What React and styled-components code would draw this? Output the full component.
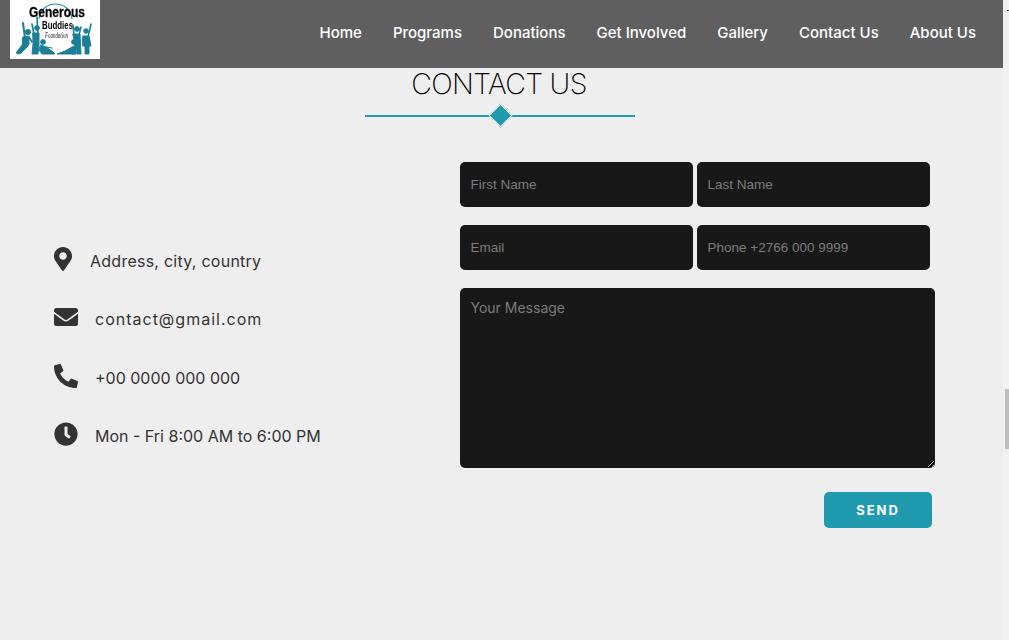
import React from "react";
import styled, { createGlobalStyle } from "styled-components";
import { FaMapMarkerAlt, FaEnvelope, FaPhoneAlt, FaClock } from "react-icons/fa";

const Global = createGlobalStyle`
  html, body { margin: 0; padding: 0; background: #eeeeee; }
  body { font-family: Inter, "Open Sans", sans-serif; overflow: hidden; }
`;

const Page = styled.div`
  position: relative;
  width: 1009px;
  height: 640px;
  overflow: hidden;
`;
const Content = styled.div`
  width: 1003px;
`;
const Header = styled.header`
  height: 68px;
  background: #5f5f5f;
  display: flex;
  justify-content: space-between;
  padding: 0 27px 0 10px;
  box-sizing: border-box;
`;
const LogoBox = styled.div`
  width: 90px;
  height: 59px;
  background: #fff;
  svg { display: block; filter: blur(0.4px); }
`;
const Nav = styled.nav`
  display: flex;
  align-items: center;
  gap: 31px;
  height: 65px;
`;
const NavLink = styled.a`
  font-size: 15px;
  font-weight: 500;
  color: #fff;
`;
const Heading = styled.div`
  width: 1000px;
`;
const Title = styled.h1`
  margin: 0;
  height: 36px;
  padding-right: 2px;
  text-align: center;
  font-size: 28.5px;
  line-height: 32px;
  font-weight: 200;
  color: #000;
  letter-spacing: -0.7px;
`;
const Divider = styled.div`
  position: relative;
  width: 270px;
  height: 2px;
  margin: 11px auto 0;
  background: #1f9aae;
`;
const Diamond = styled.span`
  position: absolute;
  left: 126.5px;
  top: -8.5px;
  width: 17px;
  height: 17px;
  box-sizing: border-box;
  background: #1f9aae;
  border: 1.5px solid #fff;
  transform: rotate(45deg);
`;
const Columns = styled.section`
  display: flex;
  padding: 45px 0 0 54px;
`;
const Info = styled.ul`
  list-style: none;
  margin: 0;
  padding: 85px 0 0;
  width: 406px;
`;
const InfoRow = styled.li`
  display: flex;
  align-items: flex-start;
  gap: ${(p) => p.$gap}px;
  height: 58.3px;
  color: #333;
  svg { height: 24px; flex: none; width: ${(p) => p.$icon}px; }
`;
const InfoText = styled.span`
  font-size: 16px;
  line-height: 24px;
  padding-top: 2px;
  color: #333;
  letter-spacing: ${(p) => p.$track}px;
`;
const Form = styled.form`
  width: 475px;
  display: flex;
  flex-direction: column;
`;
const Row = styled.div`
  display: flex;
  gap: 4px;
  margin-bottom: 18px;
`;
const Field = styled.input`
  width: 233px;
  height: 45px;
  box-sizing: border-box;
  border: 0;
  border-radius: 5px;
  padding: 0 10.5px 1px;
  background: #181818;
  color: #fff;
  font: 13.5px "Liberation Sans", Arial, sans-serif;
  &::placeholder { color: #7c7c7c; opacity: 1; }
`;
const Message = styled.textarea`
  display: block;
  width: 475px;
  height: 180px;
  box-sizing: border-box;
  border: 0;
  border-radius: 5px;
  padding: 11px 10.5px;
  background: #181818;
  color: #fff;
  font: 14px/18px Inter, sans-serif;
  &::placeholder { color: #7c7c7c; opacity: 1; }
`;
const Actions = styled.div`
  display: flex;
  justify-content: flex-end;
  padding: 24px 3px 0 0;
`;
const Send = styled.button`
  width: 108px;
  height: 36px;
  border: 0;
  border-radius: 5px;
  background: #1f9aae;
  color: #fff;
  font: 700 13px Inter, sans-serif;
  letter-spacing: 2px;
`;
const Track = styled.div`
  position: absolute;
  right: 0;
  top: 68px;
  bottom: 0;
  width: 6px;
  background: #f1f1f1;
`;
const TrackTop = styled(Track)`
  top: 0;
  bottom: auto;
  height: 68px;
`;
const Tick = styled.span`
  position: absolute;
  right: 0;
  top: 10px;
  width: 2px;
  height: 1px;
  background: #444;
`;
const Thumb = styled.div`
  position: absolute;
  right: 0;
  top: 321px;
  width: 4px;
  height: 60px;
  background: #bdbdbd;
`;

const Logo = () => (
  <svg width="90" height="59" viewBox="0 0 90 59">
    <path d="M29 19 C31 -1 60 -1 62 19" fill="none" stroke="#1f8ba0" strokeWidth="1.1" />
    <text x="19" y="17" textLength="56" lengthAdjust="spacingAndGlyphs" fontFamily="Liberation Sans" fontWeight="700" fontSize="15.5" stroke="#000" strokeWidth="0.3" fill="#000">Generous</text>
    <text x="32" y="28.5" textLength="31" lengthAdjust="spacingAndGlyphs" fontFamily="Liberation Sans" fontWeight="700" fontSize="10" fill="#000">Buddies</text>
    <text x="35" y="37.5" textLength="23" lengthAdjust="spacingAndGlyphs" fontFamily="Liberation Serif" fontStyle="italic" fontSize="8" fill="#222">Foundation</text>
    <g fill="#1c7f96" stroke="#1c7f96" strokeLinecap="round" strokeLinejoin="round">
      <circle cx="18" cy="32" r="2.6" />
      <path d="M13 37 L19 36 L19 44 L17 47 L10 54 L6 53 L12 45 Z" />
      <path d="M15 38 L13 23" strokeWidth="2" fill="none" />
      <path d="M19 37 L22 42" strokeWidth="1.6" fill="none" />
      <circle cx="27" cy="28" r="2.4" />
      <path d="M23 33 L29 33 L29 44 L28 54 L22 54 L23 44 Z" />
      <path d="M24 34 L22 24 M28 34 L27 17" strokeWidth="1.7" fill="none" />
      <circle cx="33" cy="42" r="2.4" />
      <path d="M31 45 L36 47 L43 52 L45 54 L32 54 L29 50 Z" />
      <path d="M36 47 L42 48" strokeWidth="1.2" fill="none" />
      <circle cx="64" cy="42" r="2.4" />
      <path d="M65 46 L62 47 L55 51 L47 54 L66 54 Z" />
      <circle cx="67" cy="29" r="2.4" />
      <path d="M63 34 L70 34 L71 54 L67 54 L67 47 L65 54 L62 54 L65 44 Z" />
      <path d="M64 35 L63 25 M69 35 L71 27" strokeWidth="1.6" fill="none" />
      <circle cx="76" cy="31" r="2.3" />
      <path d="M73 36 L79 36 L81 46 L79 46 L79 54 L75 54 L75 46 L73 46 Z" />
      <path d="M78 37 L81 24" strokeWidth="1.6" fill="none" />
    </g>
  </svg>
);

const links = ["Home", "Programs", "Donations", "Get Involved", "Gallery", "Contact Us", "About Us"];
const infos = [
  [FaMapMarkerAlt, "Address, city, country", 18, 0.25, 18],
  [FaEnvelope, "contact@gmail.com", 17, 1, 24],
  [FaPhoneAlt, "+00 0000 000 000", 17, 0, 24],
  [FaClock, "Mon - Fri 8:00 AM to 6:00 PM", 17, 0, 24],
];

export default function App() {
  return (
    <Page>
      <Global />
      <Content>
        <Header>
          <LogoBox><Logo /></LogoBox>
          <Nav>
            {links.map((l) => <NavLink key={l}>{l}</NavLink>)}
          </Nav>
        </Header>
        <Heading>
          <Title>CONTACT US</Title>
          <Divider><Diamond /></Divider>
        </Heading>
        <Columns>
          <Info>
            {infos.map(([Icon, text, gap, track, icon]) => (
              <InfoRow key={text} $gap={gap} $icon={icon}>
                <Icon />
                <InfoText $track={track}>{text}</InfoText>
              </InfoRow>
            ))}
          </Info>
          <Form>
            <Row>
              <Field placeholder="First Name" />
              <Field placeholder="Last Name" />
            </Row>
            <Row>
              <Field placeholder="Email" />
              <Field placeholder="Phone +2766 000 9999" />
            </Row>
            <Message placeholder="Your Message" />
            <Actions><Send type="button">SEND</Send></Actions>
          </Form>
        </Columns>
      </Content>
      <TrackTop><Tick /></TrackTop>
      <Track><Thumb /></Track>
    </Page>
  );
}
